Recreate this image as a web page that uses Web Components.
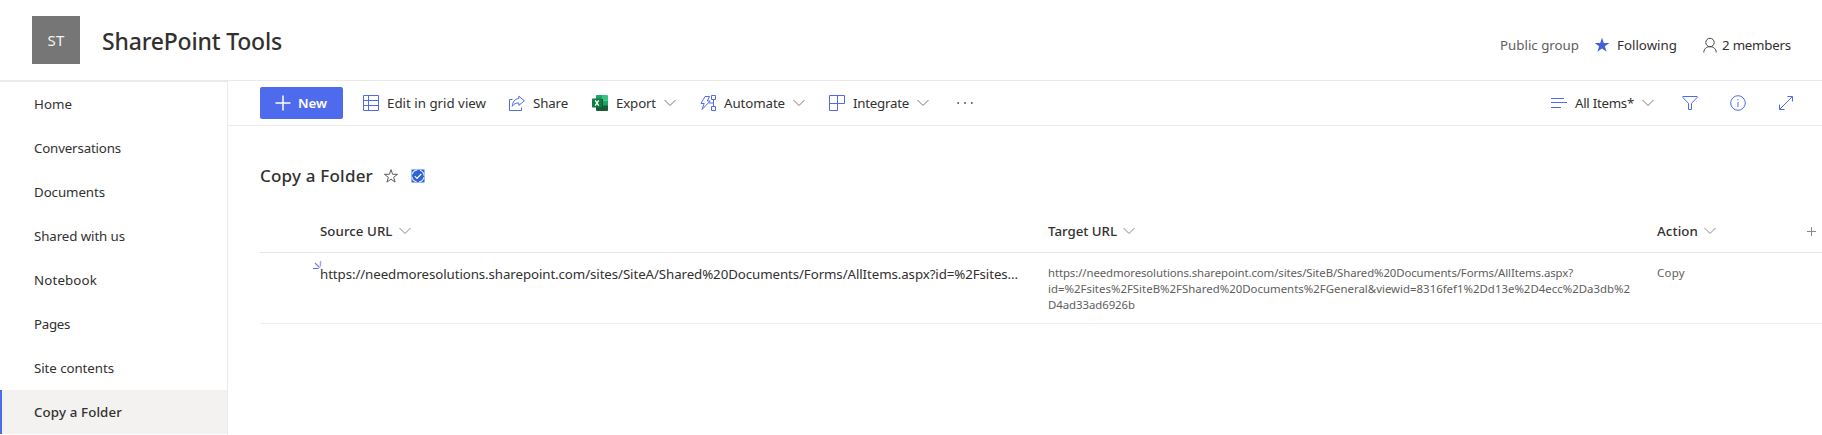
<!DOCTYPE html>
<html lang="en">
<head>
<meta charset="utf-8">
<title>SharePoint Tools</title>
<style>
html,body{margin:0;height:100%;background:#fff;overflow:hidden}
body{font-family:"Noto Sans","Open Sans",sans-serif;font-size:13.3px;color:#323130}
</style>
</head>
<body>
<sp-page></sp-page>
<script>
const define=(name,html,after)=>{
  const t=document.createElement('template');t.innerHTML=html;
  customElements.define(name,class extends HTMLElement{
    constructor(){super();this.attachShadow({mode:'open'}).append(t.content.cloneNode(true));}
    connectedCallback(){if(after)after.call(this,this.shadowRoot);}
  });
};

/* A label tracked so that its text fills the width given in w. */
define('ui-text',`<style>:host{display:block;flex:none;white-space:nowrap;line-height:20px}span{display:inline-block}</style><span><slot></slot></span>`,function(root){
  const w=parseFloat(this.getAttribute('w')),s=root.querySelector('span');
  const n=this.textContent.length,nat=s.getBoundingClientRect().width;
  s.style.letterSpacing=((w-nat)/n)+'px';
  this.style.width=w+'px';
});

const icons={
  plus:'<path d="M8 .5v15M.5 8h15" stroke-width="1.5"/>',
  grid:'<path d="M.5.5h15v15H.5zM5.5.5v15M.5 5.5h15M.5 10.5h15"/>',
  share:'<path d="M3.500 4.500h-3v11h12v-3M9.800 1.200l5.500 4.600-5.500 4.600V8C7 7.900 4.800 8.800 3.300 11.300c.2-4.500 2.700-7.500 6.500-7.800z"/>',
  chevron:'<path d="M.5 5l5.500 5.500L11.500 5"/>',
  flow:'<path d="M5 1.500h4.500L7.300 6h2.900L2 14.500l2.200-6H1zM11.500.5h4v4h-4zM11.500 11.500h4v4h-4zM13.500 4.500v7M9 8h4.500"/>',
  integrate:'<path d="M.5.5h15v8h-7v7h-8zM.5 8.500h8M8.500.5v8"/>',
  dots:'<g fill="currentColor" stroke="none"><circle cx="1.200" cy="8" r="1"/><circle cx="8" cy="8" r="1"/><circle cx="14.800" cy="8" r="1"/></g>',
  lines:'<path d="M0 3.500h13M0 7.500h16M0 12.500h10"/>',
  filter:'<path d="M.8 1.500h14.400v1L9.500 8.300v6.200h-3V8.300L.8 2.500z"/>',
  info:'<circle cx="8" cy="8" r="7.300"/><path d="M8 7v5M8 4.200v1.200"/>',
  expand:'<path d="M1.500 14.500l13-13M9.500 1.500h5v5M1.500 9.500v5h5"/>',
  person:'<circle cx="8" cy="5.500" r="4.200"/><path d="M1.800 15.500c0-3.500 2.500-5.800 6.200-5.800s6.200 2.300 6.200 5.800"/>',
  star:'<path d="M8 1.600l1.600 4.700h5l-4 3 1.500 4.800L8 11.200l-4.100 2.900 1.500-4.800-4-3h5z"/>',
  starfill:'<path fill="currentColor" stroke="none" d="M8 .7l1.800 5.300h5.600L10.900 9.300l1.700 5.500L8 11.500l-4.600 3.300 1.700-5.500L.6 6h5.600z"/>',
  check:'<path fill="#2e64d1" stroke="none" d="M1.500 1.500h13v13h-13z"/><circle cx="8" cy="8" r="6.100" stroke="#dbe6fb" stroke-width="1.200" stroke-dasharray="7 2.580" stroke-dashoffset="8.290"/><path d="M4.800 8.200l2.200 2.200 4.200-4.400" stroke="#fff" stroke-width="1.200"/>',
  excel:'<g stroke="none"><path fill="#21a366" d="M4 1a1 1 0 0 1 1-1h5v5.500H4z"/><path fill="#33c481" d="M10 0h5a1 1 0 0 1 1 1v4.500h-6z"/><path fill="#107c41" d="M4 5.500h6V11H4z"/><path fill="#21a366" d="M10 5.500h6V11h-6z"/><path fill="#185c37" d="M4 10.500h12V15a1 1 0 0 1-1 1H5a1 1 0 0 1-1-1z"/><path fill="#0b5c30" d="M4 4h7v9H4z"/><rect fill="#107c41" y="3.500" width="10" height="9" rx=".8"/></g><path stroke="#fff" stroke-width="1.300" d="M3.200 5.300l3.500 5.400M6.700 5.300L3.200 10.700"/>',
  add:'<path d="M7.500 4v9M3 8.500h9"/>',
  spark:'<path stroke="#4f6bed" d="M0 8.500h5.500"/><path stroke="#6f84f0" stroke-width="1.300" d="M2 3l4.500 4.500"/><path stroke="#b79af5" stroke-width="1.500" d="M7.500 1v5.500"/>'
};
define('ui-icon',`<style>:host{display:block;flex:none;width:16px;height:16px}svg{display:block}</style><svg width="16" height="16" viewBox="0 0 16 16" fill="none" stroke="currentColor"></svg>`,function(root){
  root.querySelector('svg').innerHTML=icons[this.getAttribute('name')];
});

define('nav-item',`<style>:host{display:flex;align-items:center;height:44px;box-sizing:border-box;padding-left:34px}
:host([selected]){background:#f3f2f1;border-left:2px solid #4f6bed;padding-left:32px;font-weight:500}</style><slot></slot>`);

define('site-header',`<style>
:host{display:flex;height:80px;border-bottom:1px solid #eaeaea}
.logo{margin:16px 0 0 32px;width:48px;height:48px;background:#767676;color:#f3f3f3;display:flex;align-items:center;justify-content:center;font-size:15px}
.title{margin:26px 0 0 22px;font-size:23px;font-weight:500;line-height:30px}
.meta{margin:35px 31px 0 auto;display:flex;align-items:center;height:20px}
.muted{color:#605e5c}
</style>
<div class="logo"><ui-text w="17">ST</ui-text></div>
<ui-text class="title" w="180">SharePoint Tools</ui-text>
<div class="meta"><ui-text class="muted" w="79">Public group</ui-text>
<ui-icon name="starfill" style="color:#4460d8;margin-left:15px"></ui-icon>
<ui-text w="60" style="margin-left:7px">Following</ui-text>
<ui-icon name="person" style="color:#484644;margin-left:25px"></ui-icon>
<ui-text w="69" style="margin-left:4px">2 members</ui-text></div>`);

define('side-nav',`<style>:host{display:block;width:227px;flex:none;border-right:1px solid #eaeaea;border-top:1px solid #eaeaea;box-sizing:content-box;height:353px}</style>
<nav>
<nav-item><ui-text w="38">Home</ui-text></nav-item>
<nav-item><ui-text w="87">Conversations</ui-text></nav-item>
<nav-item><ui-text w="71">Documents</ui-text></nav-item>
<nav-item><ui-text w="91">Shared with us</ui-text></nav-item>
<nav-item><ui-text w="63">Notebook</ui-text></nav-item>
<nav-item><ui-text w="36">Pages</ui-text></nav-item>
<nav-item><ui-text w="80">Site contents</ui-text></nav-item>
<nav-item selected><ui-text w="88">Copy a Folder</ui-text></nav-item>
</nav>`);

define('command-bar',`<style>
:host{display:flex;align-items:center;height:44px;border-bottom:1px solid #eaeaea;padding:0 28px 0 32px}
ui-icon{color:#4f6bed}
ui-icon.c{color:#797775;width:12px;margin-left:8px}
.new{display:flex;align-items:center;box-sizing:border-box;width:83px;height:32px;background:#4f6bed;border-radius:2px;color:#fff;font-weight:600;padding-left:15px}
.new ui-icon{color:#fff}
.right{margin-left:auto;display:flex;align-items:center}
</style>
<div class="new"><ui-icon name="plus"></ui-icon><ui-text w="29" style="margin-left:7px">New</ui-text></div>
<ui-icon name="grid" style="margin-left:20px"></ui-icon><ui-text w="99" style="margin-left:8px">Edit in grid view</ui-text>
<ui-icon name="share" style="margin-left:23px"></ui-icon><ui-text w="35" style="margin-left:8px">Share</ui-text>
<ui-icon name="excel" style="margin-left:24px"></ui-icon><ui-text w="40" style="margin-left:8px">Export</ui-text><ui-icon class="c" name="chevron"></ui-icon>
<ui-icon name="flow" style="margin-left:24px"></ui-icon><ui-text w="61" style="margin-left:8px">Automate</ui-text><ui-icon class="c" name="chevron"></ui-icon>
<ui-icon name="integrate" style="margin-left:24px"></ui-icon><ui-text w="56" style="margin-left:8px">Integrate</ui-text><ui-icon class="c" name="chevron"></ui-icon>
<ui-icon name="dots" style="margin-left:28px;color:#605e5c"></ui-icon>
<div class="right"><ui-icon name="lines"></ui-icon><ui-text w="59" style="margin-left:8px">All Items*</ui-text><ui-icon class="c" name="chevron"></ui-icon>
<ui-icon name="filter" style="margin-left:28px"></ui-icon><ui-icon name="info" style="margin-left:32px"></ui-icon><ui-icon name="expand" style="margin-left:32px"></ui-icon></div>`);

define('list-view',`<style>
:host{display:block;padding-left:32px}
.title{display:flex;align-items:center;height:24px;margin-top:38px}
.title ui-text{font-size:17px;font-weight:500;line-height:24px}
.row{display:grid;grid-template-columns:60px 728px 609px 165px;box-sizing:border-box}
.head{height:44px;margin-top:21px;border-bottom:1px solid #e5e5e5;font-weight:500;align-items:center}
.head div{display:flex;align-items:center}
.head ui-icon.c{color:#8a8886;width:12px;margin-left:6px}
.body{height:71px;border-bottom:1px solid #efeeed}
.source{position:relative;padding-top:11px}
.source ui-icon{position:absolute;left:-7px;top:7px}
.small{font-size:11.400px;color:#605e5c;padding-top:12px}
.small ui-text{line-height:16px}
</style>
<div class="title"><ui-text w="113">Copy a Folder</ui-text><ui-icon name="star" style="color:#605e5c;margin-left:10px"></ui-icon><ui-icon name="check" style="margin-left:11px"></ui-icon></div>
<div class="row head"><span></span>
<div><ui-text w="72.500">Source URL</ui-text><ui-icon class="c" name="chevron"></ui-icon></div>
<div><ui-text w="69">Target URL</ui-text><ui-icon class="c" name="chevron"></ui-icon></div>
<div><ui-text w="41">Action</ui-text><ui-icon class="c" name="chevron"></ui-icon><ui-icon name="add" style="color:#8a8886;margin-left:88px"></ui-icon></div></div>
<div class="row body"><span></span>
<div class="source"><ui-icon name="spark"></ui-icon><ui-text w="698">https://needmoresolutions.sharepoint.com/sites/SiteA/Shared%20Documents/Forms/AllItems.aspx?id=%2Fsites...</ui-text></div>
<div class="small"><ui-text w="525">https://needmoresolutions.sharepoint.com/sites/SiteB/Shared%20Documents/Forms/AllItems.aspx?</ui-text>
<ui-text w="582">id=%2Fsites%2FSiteB%2FShared%20Documents%2FGeneral&amp;viewid=8316fef1%2Dd13e%2D4ecc%2Da3db%2</ui-text>
<ui-text w="87">D4ad33ad6926b</ui-text></div>
<div class="small"><ui-text w="28">Copy</ui-text></div></div>`);

define('sp-page',`<style>:host{display:block;height:435px;overflow:hidden}.body{display:flex}main{flex:1;min-width:0}</style>
<site-header></site-header><div class="body"><side-nav></side-nav><main><command-bar></command-bar><list-view></list-view></main></div>`);
</script>
</body>
</html>
